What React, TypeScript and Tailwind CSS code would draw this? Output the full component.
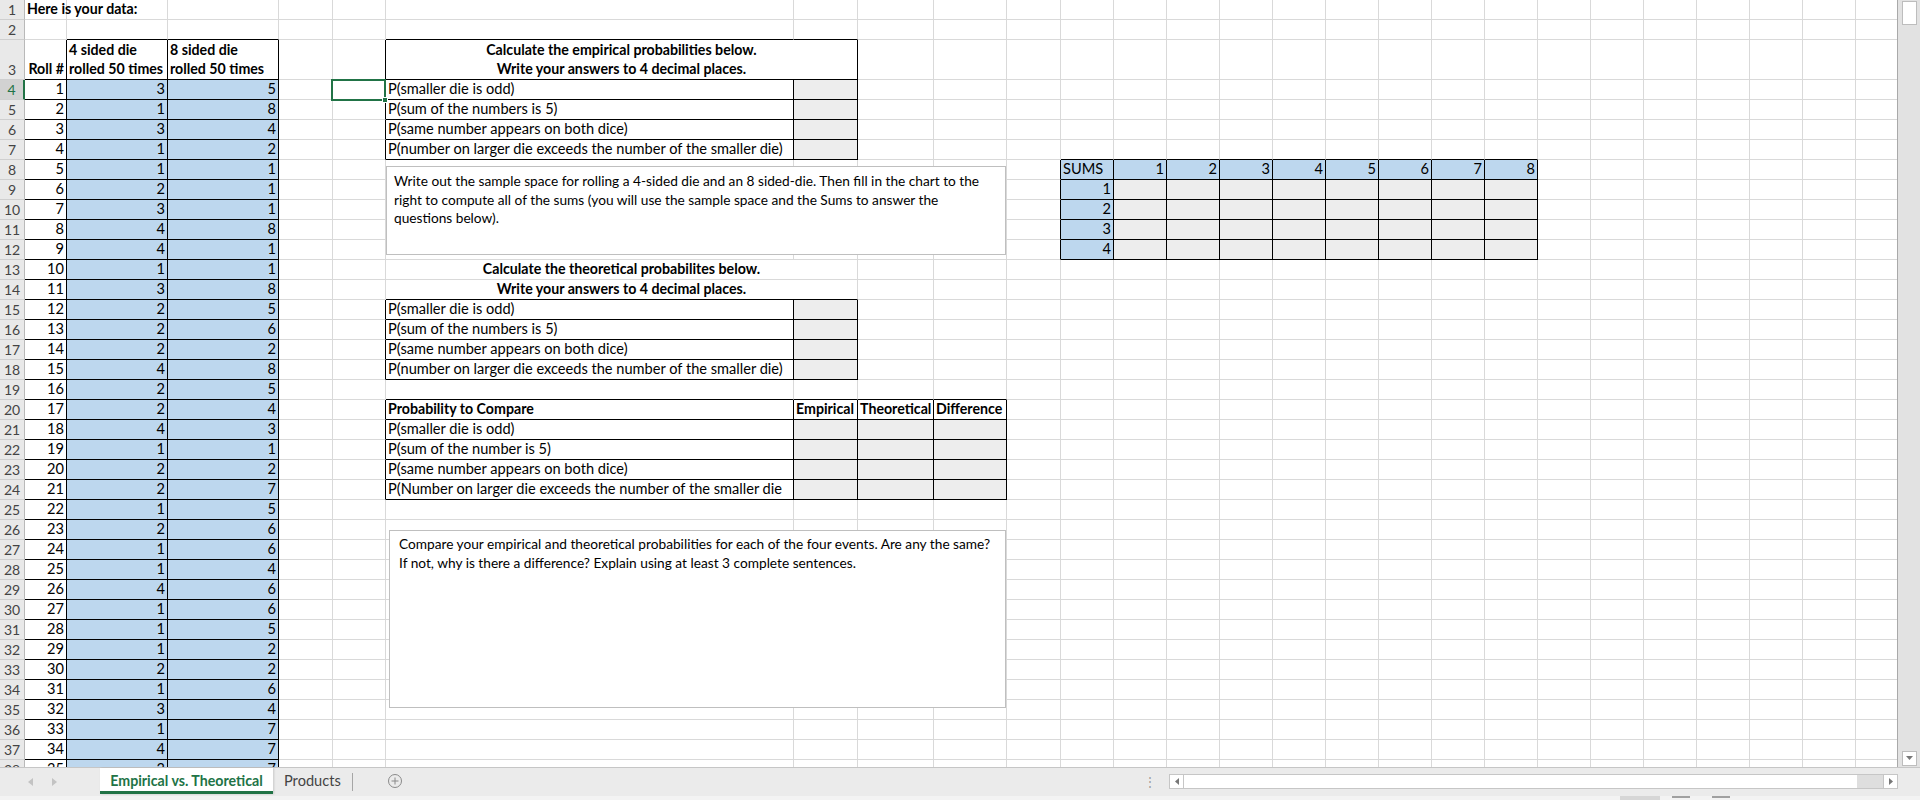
import React from "react";

type Cell = {
  text?: string;
  lines?: string[];
  align?: "left" | "right" | "center";
  bold?: boolean;
  bg?: "blue" | "gray";
  border?: boolean;
  span?: number;
};

// die rolls: [4 sided, 8 sided]
const rolls: [number, number][] = [
  [3, 5], [1, 8], [3, 4], [1, 2], [1, 1], [2, 1], [3, 1], [4, 8], [4, 1], [1, 1],
  [3, 8], [2, 5], [2, 6], [2, 2], [4, 8], [2, 5], [2, 4], [4, 3], [1, 1], [2, 2],
  [2, 7], [1, 5], [2, 6], [1, 6], [1, 4], [4, 6], [1, 6], [1, 5], [1, 2], [2, 2],
  [1, 6], [3, 4], [1, 7], [4, 7], [3, 7],
];

const ROWS = 38;
const COLS = 26;

const probs = [
  "P(smaller die is odd)",
  "P(sum of the numbers is 5)",
  "P(same number appears on both dice)",
  "P(number on larger die exceeds the number of the smaller die)",
];

const compareProbs = [
  "P(smaller die is odd)",
  "P(sum of the number is 5)",
  "P(same number appears on both dice)",
  "P(Number on larger die exceeds the number of the smaller die",
];

function buildCells() {
  const m = new Map<string, Cell>();
  const covered = new Set<string>();
  const set = (r: number, c: number, cell: Cell) => {
    m.set(`${r},${c}`, cell);
    if (cell.span && cell.span > 1) {
      for (let i = 1; i < cell.span; i++) covered.add(`${r},${c + i}`);
    }
  };

  set(1, 0, { text: "Here is your data:", bold: true });
  set(3, 0, { text: "Roll #", bold: true, align: "right" });
  set(3, 1, { lines: ["4 sided die", "rolled 50 times"], bold: true, border: true });
  set(3, 2, { lines: ["8 sided die", "rolled 50 times"], bold: true, border: true });
  rolls.forEach(([a, b], i) => {
    const r = 4 + i;
    set(r, 0, { text: String(i + 1), align: "right", border: true });
    set(r, 1, { text: String(a), align: "right", bg: "blue", border: true });
    set(r, 2, { text: String(b), align: "right", bg: "blue", border: true });
  });

  // empirical
  set(3, 5, {
    lines: ["Calculate the empirical probabilities below.", "Write your answers to 4 decimal places."],
    bold: true,
    align: "center",
    border: true,
    span: 2,
  });
  probs.forEach((p, i) => {
    set(4 + i, 5, { text: p, border: true });
    set(4 + i, 6, { bg: "gray", border: true });
  });

  // theoretical
  set(13, 5, { text: "Calculate the theoretical probabilites below.", bold: true, align: "center", span: 2 });
  set(14, 5, { text: "Write your answers to 4 decimal places.", bold: true, align: "center", span: 2 });
  probs.forEach((p, i) => {
    set(15 + i, 5, { text: p, border: true });
    set(15 + i, 6, { bg: "gray", border: true });
  });

  // compare
  set(20, 5, { text: "Probability to Compare", bold: true, border: true });
  set(20, 6, { text: "Empirical", bold: true, border: true });
  set(20, 7, { text: "Theoretical", bold: true, border: true });
  set(20, 8, { text: "Difference", bold: true, border: true });
  compareProbs.forEach((p, i) => {
    set(21 + i, 5, { text: p, border: true });
    set(21 + i, 6, { bg: "gray", border: true });
    set(21 + i, 7, { bg: "gray", border: true });
    set(21 + i, 8, { bg: "gray", border: true });
  });

  // sums chart
  set(8, 10, { text: "SUMS", bg: "blue", border: true });
  for (let j = 1; j <= 8; j++) set(8, 10 + j, { text: String(j), align: "right", bg: "blue", border: true });
  for (let i = 1; i <= 4; i++) {
    set(8 + i, 10, { text: String(i), align: "right", bg: "blue", border: true });
    for (let j = 1; j <= 8; j++) set(8 + i, 10 + j, { bg: "gray", border: true });
  }

  return { m, covered };
}

export default function App() {
  const { m, covered } = buildCells();

  const bordered = (r: number, c: number) => {
    if (m.get(`${r},${c}`)?.border) return true;
    if (covered.has(`${r},${c}`)) {
      for (let k = c - 1; k >= 0; k--) {
        const cell = m.get(`${r},${k}`);
        if (cell) return !!cell.border;
      }
    }
    return false;
  };

  const out: React.ReactNode[] = [];
  for (let r = 1; r <= ROWS; r++) {
    const sel = r === 4;
    out.push(
      <div
        key={`h${r}`}
        className={`flex items-end justify-center border-b border-b-[#cfcfcf] pb-[1px] text-[14px] leading-[17px] ${
          sel
            ? "border-r-2 border-r-[#217346] bg-[#d2d2d2] text-[#217346]"
            : "border-r border-r-[#b9b9b9] bg-[#e9e9e9] text-[#444]"
        }`}
      >
        {r}
      </div>
    );
    for (let c = 0; c < COLS; c++) {
      if (covered.has(`${r},${c}`)) continue;
      const cell = m.get(`${r},${c}`) ?? {};
      const span = cell.span ?? 1;
      const lastCol = c + span - 1;
      const rightBlack = bordered(r, lastCol) || bordered(r, lastCol + 1);
      const bottomBlack = bordered(r, c) || bordered(r + 1, c);
      const content = cell.lines ? (
        <div className="flex flex-col">
          {cell.lines.map((l) => (
            <span key={l} className="leading-[19px]">{l}</span>
          ))}
        </div>
      ) : (
        cell.text
      );
      out.push(
        <div
          key={`${r}-${c}`}
          className={`flex min-w-0 items-end whitespace-nowrap border-r border-b px-[2px] pb-[1px] leading-[18px] text-black ${
            span === 2 ? "col-span-2" : ""
          } ${rightBlack ? "border-r-black" : "border-r-[#d9d9d9]"} ${
            bottomBlack ? "border-b-black" : "border-b-[#d9d9d9]"
          } ${cell.bg === "blue" ? "bg-[#bdd7ee]" : cell.bg === "gray" ? "bg-[#ededed]" : ""} ${
            cell.align === "right" ? "justify-end" : cell.align === "center" ? "justify-center text-center" : "justify-start"
          } ${cell.bold ? "text-[14.2px] font-bold" : "text-[14.6px]"}`}
        >
          {content}
        </div>
      );
    }
  }

  return (
    <div className="flex h-[800px] w-[1920px] flex-col overflow-hidden bg-white font-['Lato',sans-serif]">
      <div className="flex h-[767px] shrink-0">
        {/* sheet */}
        <div className="relative h-[767px] w-[1898px] shrink-0 overflow-hidden border-r border-r-[#a9a9a9]">
          <div className="grid grid-cols-[25px_42px_101px_111px_54px_53px_408px_64px_76px_73px_54px_repeat(16,53px)] grid-rows-[20px_20px_40px_repeat(35,20px)]">
            {out}
          </div>

          {/* active cell */}
          <div className="absolute left-[331px] top-[79px] h-[22px] w-[55px] border-2 border-[#217346]" />
          <div className="absolute left-[382px] top-[97px] h-[6px] w-[6px] border border-white bg-[#217346]" />

          {/* text box 1 */}
          <div className="absolute left-[386px] top-[166px] h-[89px] w-[620px] border border-[#bfbfbf] bg-white px-[7px] pt-[5px] text-[13.7px] leading-[18.5px] text-black">
            <p className="whitespace-nowrap">
              Write out the sample space for rolling a 4-sided die and an 8 sided-die. Then fill in the chart to the
            </p>
            <p className="whitespace-nowrap">
              right to compute all of the sums (you will use the sample space and the Sums to answer the
            </p>
            <p className="whitespace-nowrap">questions below).</p>
          </div>

          {/* text box 2 */}
          <div className="absolute left-[389px] top-[530px] h-[178px] w-[617px] border border-[#bfbfbf] bg-white px-[9px] pt-[4px] text-[13.7px] leading-[18.5px] text-black">
            <p className="whitespace-nowrap">
              Compare your empirical and theoretical probabilities for each of the four events. Are any the same?
            </p>
            <p className="whitespace-nowrap">
              If not, why is there a difference? Explain using at least 3 complete sentences.
            </p>
          </div>
        </div>

        {/* vertical scrollbar */}
        <div className="flex w-[22px] flex-col items-center justify-between bg-[#e2e2e2] py-[1px]">
          <div className="mt-0 h-[24px] w-[15px] border border-[#bdbdbd] bg-white" />
          <div className="flex h-[15px] w-[15px] items-center justify-center border border-[#bdbdbd] bg-white">
            <svg width="7" height="5" viewBox="0 0 7 5">
              <polygon points="0,0 7,0 3.5,4" fill="#777" />
            </svg>
          </div>
        </div>
      </div>

      {/* sheet tabs */}
      <div className="flex h-[29px] shrink-0 items-start border-t border-t-[#c6c6c6] bg-[#ebebeb]">
        <div className="flex h-[27px] w-[100px] items-center gap-[19px] pl-[28px]">
          <svg width="5" height="8" viewBox="0 0 5 8">
            <polygon points="5,0 5,8 0,4" fill="#c3c3c3" />
          </svg>
          <svg width="5" height="8" viewBox="0 0 5 8">
            <polygon points="0,0 0,8 5,4" fill="#c3c3c3" />
          </svg>
        </div>
        <div className="flex h-[26px] w-[173px] items-center justify-center border-b-[3px] border-b-[#217346] bg-white pt-[2px] text-[14.2px] font-bold leading-[18px] text-[#217346] shadow-[1px_0_2px_rgba(0,0,0,0.15)]">
          Empirical vs. Theoretical
        </div>
        <div className="flex h-[26px] items-center px-[11px] text-[14.6px] leading-[18px] text-[#444]">Products</div>
        <div className="mt-[5px] h-[18px] w-px bg-[#a6a6a6]" />
        <div className="ml-[34px] flex h-[26px] items-center">
          <svg width="16" height="16" viewBox="0 0 16 16">
            <circle cx="8" cy="8" r="6.5" fill="none" stroke="#8a8a8a" strokeWidth="1" />
            <path d="M8 4.5v7M4.5 8h7" stroke="#8a8a8a" strokeWidth="1" />
          </svg>
        </div>
        <div className="ml-auto flex h-[27px] items-center">
          <span className="mr-[14px] text-[12px] leading-none tracking-tighter text-[#9a9a9a]">⋮</span>
          <div className="flex h-[15px] w-[729px] items-stretch border border-[#c6c6c6] bg-[#dedede]">
            <div className="flex w-[14px] items-center justify-center border-r border-r-[#c6c6c6] bg-white">
              <svg width="4" height="7" viewBox="0 0 4 7">
                <polygon points="4,0 4,7 0,3.5" fill="#777" />
              </svg>
            </div>
            <div className="w-[673px] bg-white" />
            <div className="flex-1" />
            <div className="flex w-[14px] items-center justify-center border-l border-l-[#c6c6c6] bg-white">
              <svg width="4" height="7" viewBox="0 0 4 7">
                <polygon points="0,0 0,7 4,3.5" fill="#777" />
              </svg>
            </div>
          </div>
          <div className="w-[22px]" />
        </div>
      </div>

      {/* status bar */}
      <div className="relative flex h-[4px] shrink-0 bg-[#f3f3f3]">
        <div className="ml-[1620px] h-full w-[40px] bg-[#d6d6d6]" />
        <div className="ml-[12px] h-[2px] w-[18px] bg-[#a0a0a0]" />
        <div className="ml-[22px] h-[2px] w-[18px] bg-[#a0a0a0]" />
      </div>
    </div>
  );
}
